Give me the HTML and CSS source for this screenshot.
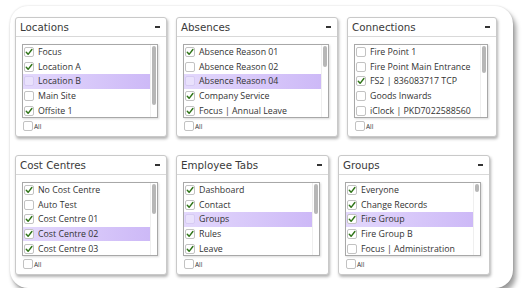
FILE: index.html
```html
<!DOCTYPE html>
<html>
<head>
<meta charset="utf-8">
<link rel="stylesheet" href="styles.css">
</head>
<body>
<svg width="0" height="0" class="defs" aria-hidden="true">
  <symbol id="tick" viewBox="0 0 10 10">
    <path d="M1.6 5.4 L3.9 7.9 L8.6 1.9" fill="none" stroke="#2f7418" stroke-width="1.8" stroke-linecap="round" stroke-linejoin="round"/>
  </symbol>
</svg>
<div class="frame">
  <div class="row">
    <section class="card w152">
      <header class="card-head"><span class="title">Locations</span><span class="minus"></span></header>
      <div class="list">
        <div class="items">
          <div class="item"><span class="cb"><svg class="tick"><use href="#tick"/></svg></span>Focus</div>
          <div class="item"><span class="cb"><svg class="tick"><use href="#tick"/></svg></span>Location A</div>
          <div class="item hl"><span class="cb off"></span>Location B</div>
          <div class="item"><span class="cb"></span>Main Site</div>
          <div class="item"><span class="cb"><svg class="tick"><use href="#tick"/></svg></span>Offsite 1</div>
        </div>
        <div class="sb"><div class="thumb" style="height:59px"></div></div>
      </div>
      <label class="all"><span class="cb"></span>All</label>
    </section>
    <section class="card w162">
      <header class="card-head"><span class="title">Absences</span><span class="minus"></span></header>
      <div class="list">
        <div class="items">
          <div class="item"><span class="cb"><svg class="tick"><use href="#tick"/></svg></span>Absence Reason 01</div>
          <div class="item"><span class="cb"></span>Absence Reason 02</div>
          <div class="item hl"><span class="cb off"></span>Absence Reason 04</div>
          <div class="item"><span class="cb"><svg class="tick"><use href="#tick"/></svg></span>Company Service</div>
          <div class="item"><span class="cb"><svg class="tick"><use href="#tick"/></svg></span>Focus | Annual Leave</div>
        </div>
        <div class="sb"><div class="thumb" style="height:21px"></div></div>
      </div>
      <label class="all"><span class="cb"></span>All</label>
    </section>
    <section class="card w150">
      <header class="card-head"><span class="title">Connections</span><span class="minus"></span></header>
      <div class="list">
        <div class="items">
          <div class="item"><span class="cb"></span>Fire Point 1</div>
          <div class="item"><span class="cb"></span>Fire Point Main Entrance</div>
          <div class="item"><span class="cb"><svg class="tick"><use href="#tick"/></svg></span>FS2 | 836083717 TCP</div>
          <div class="item"><span class="cb"></span>Goods Inwards</div>
          <div class="item"><span class="cb"></span>iClock | PKD7022588560</div>
        </div>
        <div class="sb"><div class="thumb" style="height:27px"></div></div>
      </div>
      <label class="all"><span class="cb"></span>All</label>
    </section>
  </div>
  <div class="row">
    <section class="card w152">
      <header class="card-head"><span class="title">Cost Centres</span><span class="minus"></span></header>
      <div class="list">
        <div class="items">
          <div class="item"><span class="cb"><svg class="tick"><use href="#tick"/></svg></span>No Cost Centre</div>
          <div class="item"><span class="cb"></span>Auto Test</div>
          <div class="item"><span class="cb"><svg class="tick"><use href="#tick"/></svg></span>Cost Centre 01</div>
          <div class="item hl"><span class="cb"><svg class="tick"><use href="#tick"/></svg></span>Cost Centre 02</div>
          <div class="item"><span class="cb"><svg class="tick"><use href="#tick"/></svg></span>Cost Centre 03</div>
        </div>
        <div class="sb"><div class="thumb" style="height:30px"></div></div>
      </div>
      <label class="all"><span class="cb"></span>All</label>
    </section>
    <section class="card w153">
      <header class="card-head"><span class="title">Employee Tabs</span><span class="minus"></span></header>
      <div class="list">
        <div class="items">
          <div class="item"><span class="cb"><svg class="tick"><use href="#tick"/></svg></span>Dashboard</div>
          <div class="item"><span class="cb"><svg class="tick"><use href="#tick"/></svg></span>Contact</div>
          <div class="item hl"><span class="cb off"></span>Groups</div>
          <div class="item"><span class="cb"><svg class="tick"><use href="#tick"/></svg></span>Rules</div>
          <div class="item"><span class="cb"><svg class="tick"><use href="#tick"/></svg></span>Leave</div>
        </div>
        <div class="sb"><div class="thumb" style="height:30px"></div></div>
      </div>
      <label class="all"><span class="cb"></span>All</label>
    </section>
    <section class="card w152">
      <header class="card-head"><span class="title">Groups</span><span class="minus"></span></header>
      <div class="list">
        <div class="items">
          <div class="item"><span class="cb"><svg class="tick"><use href="#tick"/></svg></span>Everyone</div>
          <div class="item"><span class="cb"><svg class="tick"><use href="#tick"/></svg></span>Change Records</div>
          <div class="item hl"><span class="cb"><svg class="tick"><use href="#tick"/></svg></span>Fire Group</div>
          <div class="item"><span class="cb"><svg class="tick"><use href="#tick"/></svg></span>Fire Group B</div>
          <div class="item"><span class="cb"></span>Focus | Administration</div>
        </div>
        <div class="sb"><div class="thumb" style="height:8px"></div></div>
      </div>
      <label class="all"><span class="cb"></span>All</label>
    </section>
  </div>
</div>
</body>
</html>
```
FILE: styles.css
```css
html, body {
  margin: 0;
  padding: 0;
  background: #fff;
}
body {
  font-family: "Open Sans", "Liberation Sans", sans-serif;
  color: #333;
}
.defs {
  position: absolute;
  width: 0;
  height: 0;
}
.frame {
  margin: 6px 0 0 10px;
  width: 503px;
  height: 282px;
  box-sizing: border-box;
  border-radius: 18px;
  background: #fff;
  box-shadow: 3px 5px 5px rgba(0, 0, 0, 0.38), 0 0 2px rgba(0, 0, 0, 0.18);
  padding: 11px 0 0 5px;
  display: flex;
  flex-direction: column;
  gap: 18px;
}
.row {
  display: flex;
  gap: 9px;
}
.card {
  height: 120px;
  box-sizing: border-box;
  border: 1px solid #c9c9c9;
  border-radius: 3px;
  background: #fff;
  box-shadow: 1px 2px 3px rgba(0, 0, 0, 0.3);
  display: flex;
  flex-direction: column;
}
.w150 { width: 150px; }
.w152 { width: 152px; }
.w153 { width: 153px; }
.w162 { width: 162px; }
.card-head {
  height: 18px;
  flex: none;
  border-bottom: 1px solid #d9d9d9;
  display: flex;
  align-items: center;
  justify-content: space-between;
  padding: 0 6px 0 4px;
}
.title {
  font-family: "DejaVu Sans", sans-serif;
  font-size: 10.3px;
  color: #3a3a3a;
  line-height: 1;
}
.minus {
  width: 5px;
  height: 2px;
  background: #333;
}
.list {
  margin: 7px 8px 0 6px;
  height: 74px;
  flex: none;
  box-sizing: border-box;
  border: 1px solid #a8a8a8;
  box-shadow: 1px 1px 2px rgba(0, 0, 0, 0.15);
  display: flex;
  overflow: hidden;
}
.items {
  flex: 1;
  min-width: 0;
  overflow: hidden;
}
.sb {
  width: 7px;
  flex: none;
  box-sizing: border-box;
  padding: 1px 1px 0 1px;
  border-left: 1px solid #efefef;
}
.thumb {
  width: 4px;
  background: #b7b7b7;
  border-radius: 2px;
}
.item {
  height: 14.6px;
  display: flex;
  align-items: center;
  gap: 4px;
  padding-left: 1px;
  font-size: 8.8px;
  color: #333;
  white-space: nowrap;
}
.item.hl {
  background: linear-gradient(to right, #e3d8fc, #cdb9f7);
}
.cb {
  width: 10px;
  height: 10px;
  flex: none;
  box-sizing: border-box;
  border: 1px solid #c2c2c2;
  border-radius: 2px;
  background: #fff;
  display: flex;
  align-items: center;
  justify-content: center;
}
.cb.off {
  background: #e9e1fc;
  border-color: #d6cbf3;
}
.tick {
  width: 8px;
  height: 8px;
}
.all {
  display: flex;
  align-items: center;
  gap: 1px;
  margin: 3px 0 0 7px;
  font-size: 6.5px;
  color: #333;
}
```
